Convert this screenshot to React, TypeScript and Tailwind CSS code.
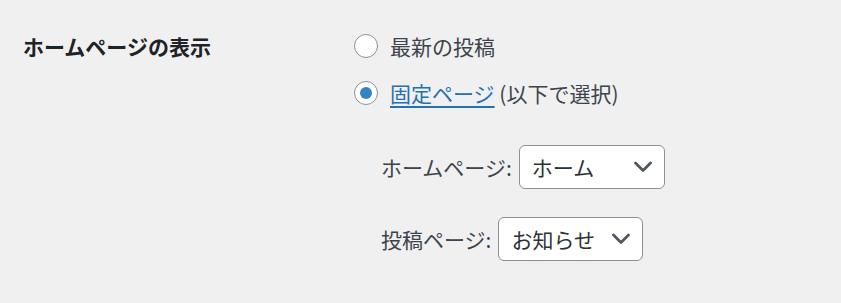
const font = { fontFamily: '"Noto Sans CJK JP", "Noto Sans", sans-serif' };

function Radio({ checked }: { checked?: boolean }) {
  return (
    <span className="flex h-[24px] w-[24px] shrink-0 items-center justify-center rounded-full border-[1.5px] border-[#8c8f94] bg-white">
      {checked && <span className="h-[12px] w-[12px] rounded-full bg-[#3582c4]" />}
    </span>
  );
}

function Chevron() {
  return (
    <svg width="20" height="20" viewBox="0 0 20 20" fill="none" className="shrink-0">
      <polyline points="2.5,6 10,13.5 17.5,6" stroke="#50575e" strokeWidth="2.8" strokeLinecap="round" strokeLinejoin="round" />
    </svg>
  );
}

function SelectBox({ value, width }: { value: string; width: string }) {
  return (
    <div className={`flex h-[44px] ${width} items-center justify-between rounded-[6px] border border-[#8c8f94] bg-white pl-[12px] pr-[11px] text-[21px] leading-[28px] text-[#2c3338]`}>
      <span>{value}</span>
      <Chevron />
    </div>
  );
}

export default function App() {
  return (
    <div className="flex h-[303px] w-full bg-[#f0f0f1] pl-[23px] pt-[32px]" style={font}>
      <div className="w-[331px] shrink-0 text-[21px] font-semibold leading-[28px] text-[#1d2327]">
        ホームページの表示
      </div>
      <div className="flex flex-col text-[21px] leading-[28px] text-[#3c434a]">
        <label className="flex h-[28px] items-center gap-[12px]">
          <Radio />
          <span>最新の投稿</span>
        </label>
        <label className="mt-[19px] flex h-[28px] items-center gap-[12px]">
          <Radio checked />
          <span>
            <a className="text-[#2271b1] underline decoration-[1.5px] underline-offset-[4px]">固定ページ</a> (以下で選択)
          </span>
        </label>
        <div className="ml-[27px] mt-[38px] flex flex-col gap-[28px]">
          <div className="flex items-center gap-[7px]">
            <span>ホームページ:</span>
            <SelectBox value="ホーム" width="w-[146px]" />
          </div>
          <div className="flex items-center gap-[7px]">
            <span>投稿ページ:</span>
            <SelectBox value="お知らせ" width="w-[145px]" />
          </div>
        </div>
      </div>
    </div>
  );
}
